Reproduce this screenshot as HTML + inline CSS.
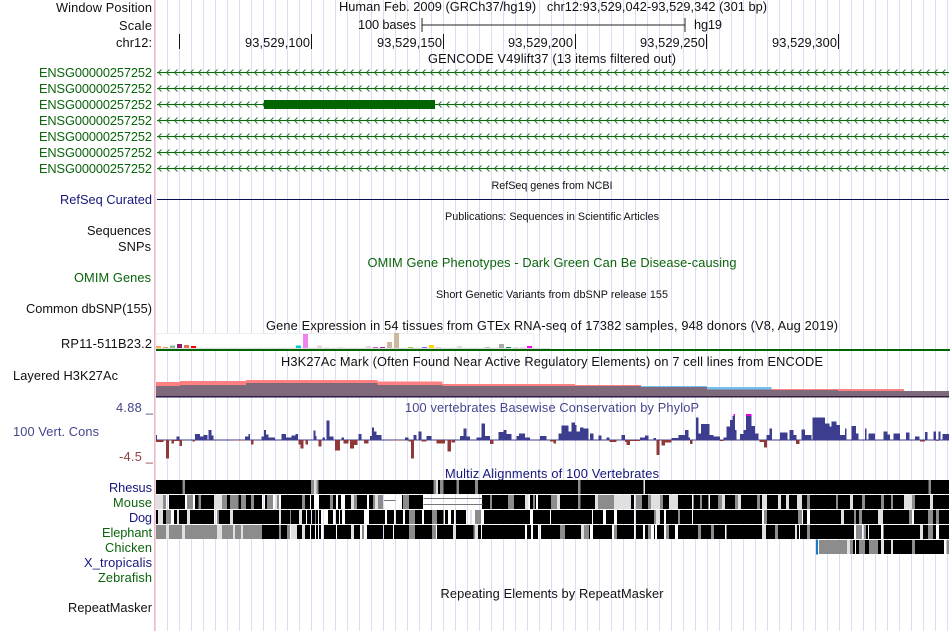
<!DOCTYPE html>
<html><head><meta charset="utf-8"><style>
html,body{margin:0;padding:0;background:#fff;width:950px;height:631px;overflow:hidden}
svg{display:block}
text{font-family:"Liberation Sans",sans-serif;font-size:12.8px;fill:#111}
.r{text-anchor:end}.m{text-anchor:middle}.s{font-size:10.8px}
.g{fill:#0a640a}.n{fill:#16167c}.b{fill:#45458f}.d{fill:#8f3f3f}
.ln{fill:none;stroke-width:42}
</style></head><body>
<svg width="950" height="631" viewBox="0 0 950 631" xmlns="http://www.w3.org/2000/svg" shape-rendering="crispEdges">
<defs>
<pattern id="grid" x="167" y="0" width="12" height="10" patternUnits="userSpaceOnUse"><rect x="0" y="0" width="1" height="10" fill="#dcdcf4"/></pattern>
<pattern id="arr" x="157" y="0" width="8" height="7" patternUnits="userSpaceOnUse"><path d="M0 3.5H8" stroke="#0a640a" stroke-width="1" fill="none"/><path d="M4.500 .5L1.500 3.500L4.500 6.500" stroke="#1f7a1f" stroke-width="1" fill="none" shape-rendering="auto"/></pattern>
</defs>
<rect width="950" height="631" fill="#fff"/>
<rect x="155" y="0" width="795" height="631" fill="url(#grid)"/>
<rect x="154" y="0" width="1" height="631" fill="#ffb4b4"/>

<!-- header -->
<text class="r" x="152" y="12" textLength="96">Window Position</text>
<text class="r" x="152" y="30" textLength="33">Scale</text>
<text class="r" x="152" y="47" textLength="36">chr12:</text>
<text x="339" y="11" textLength="428">Human Feb. 2009 (GRCh37/hg19)&#160;&#160; chr12:93,529,042-93,529,342 (301 bp)</text>
<text x="358" y="29" textLength="58">100 bases</text>
<text x="694" y="29" textLength="28">hg19</text>
<path d="M422 25H685" stroke="#222" fill="none"/>
<path d="M422 18V32M685 18V32" stroke="#222" fill="none"/>
<path d="M179.500 34V49M311.500 34V49M443.500 34V49M575.500 34V49M706.500 34V49M838.500 34V49" stroke="#111" fill="none"/>
<text x="245" y="47" textLength="65">93,529,100</text>
<text x="377" y="47" textLength="65">93,529,150</text>
<text x="508" y="47" textLength="65">93,529,200</text>
<text x="640" y="47" textLength="65">93,529,250</text>
<text x="772" y="47" textLength="65">93,529,300</text>
<text class="m" x="552" y="63" textLength="248">GENCODE V49lift37 (13 items filtered out)</text>

<!-- genes -->
<text class="r g" x="152" y="77" textLength="113">ENSG00000257252</text>
<text class="r g" x="152" y="93" textLength="113">ENSG00000257252</text>
<text class="r g" x="152" y="109" textLength="113">ENSG00000257252</text>
<text class="r g" x="152" y="125" textLength="113">ENSG00000257252</text>
<text class="r g" x="152" y="141" textLength="113">ENSG00000257252</text>
<text class="r g" x="152" y="157" textLength="113">ENSG00000257252</text>
<text class="r g" x="152" y="173" textLength="113">ENSG00000257252</text>
<g fill="url(#arr)">
<rect x="157" y="0" width="792" height="7" transform="translate(0,69)"/>
<rect x="157" y="0" width="792" height="7" transform="translate(0,85)"/>
<rect x="157" y="0" width="792" height="7" transform="translate(0,101)"/>
<rect x="157" y="0" width="792" height="7" transform="translate(0,117)"/>
<rect x="157" y="0" width="792" height="7" transform="translate(0,133)"/>
<rect x="157" y="0" width="792" height="7" transform="translate(0,149)"/>
<rect x="157" y="0" width="792" height="7" transform="translate(0,165)"/>
</g>
<rect x="264" y="100" width="171" height="9" fill="#006400"/>

<!-- middle labels -->
<text class="m s" x="552" y="189" textLength="121">RefSeq genes from NCBI</text>
<text class="r n" x="152" y="204" textLength="92">RefSeq Curated</text>
<rect x="157" y="199" width="792" height="1" fill="#0c0c50"/>
<text class="m s" x="552" y="220" textLength="214">Publications: Sequences in Scientific Articles</text>
<text class="r" x="151" y="235" textLength="64">Sequences</text>
<text class="r" x="151" y="251" textLength="33">SNPs</text>
<text class="m g" x="552" y="267" textLength="369">OMIM Gene Phenotypes - Dark Green Can Be Disease-causing</text>
<text class="r g" x="151" y="282" textLength="77">OMIM Genes</text>
<text class="m s" x="552" y="298" textLength="232">Short Genetic Variants from dbSNP release 155</text>
<text class="r" x="152" y="313" textLength="126">Common dbSNP(155)</text>
<text class="m" x="552" y="330" textLength="572">Gene Expression in 54 tissues from GTEx RNA-seq of 17382 samples, 948 donors (V8, Aug 2019)</text>
<text class="r" x="152" y="348" textLength="91">RP11-511B23.2</text>

<!-- expression -->
<g transform="translate(150,330) scale(.33333)">
<rect x="18" y="10" width="1134" height="44" fill="#fff" stroke="#eee" stroke-width="3"/>
<rect x="18" y="54" width="1182" height="3" fill="#ddd"/>
<path fill="#f9a75d" d="M18 54V48H33V54"/><path fill="#ee9944" d="M39 54V51H54V54"/><path fill="#8fbc8f" d="M60 54V47H75V54"/><path fill="#8b1a6b" d="M81 54V42H96V54"/><path fill="#ee6a50" d="M102 54V45H117V54"/><path fill="#f00" d="M123 54V48H138V54"/>
<path fill="#00cdcd" d="M438 54V47H453V54"/><path fill="#ee82ee" d="M459 54V12H474V54"/><path fill="#eed5d2" d="M501 54V47H516V54"/><path fill="#eeeee0" d="M522 54V51H537V54"/><path fill="#eedfcc" d="M564 54V51H579V54"/><path fill="#eed5d2" d="M648 54V48H663V54"/><path fill="#b469c8" d="M669 54V51H684V54"/><path fill="#9b30a0" d="M690 54V51H705V54"/><path fill="#cdb79e" d="M711 54V36H726V54M732 54V9H747V54"/><path fill="#9acd32" d="M774 54V51H789V54"/><path fill="#8470ff" d="M816 54V51H831V54"/><path fill="#ffd700" d="M837 54V45H852V54"/><path fill="#ffc0cb" d="M858 54V51H873V54"/><path fill="#ddd" d="M921 54V48H936V54M1089 54V51H1104V54M1110 54V51H1125V54"/><path fill="#bbb" d="M1005 54V51H1020V54"/><path fill="#aaa" d="M1047 54V42H1062V54"/><path fill="#008b45" d="M1068 54V51H1083V54"/><path fill="#f0f" d="M1131 54V48H1146V54"/>
</g>
<rect x="156" y="349" width="794" height="2" fill="#006400"/>

<!-- H3K27Ac -->
<text class="m" x="552" y="366" textLength="542">H3K27Ac Mark (Often Found Near Active Regulatory Elements) on 7 cell lines from ENCODE</text>
<text class="r" x="118" y="380" textLength="105">Layered H3K27Ac</text>
<g transform="translate(150,330) scale(.33333)">
<path fill="#ff8080" d="M18 202V156H90V153H288V150H682V154H878V162H1200V202"/>
<path fill="#7f6a7b" d="M18 202V168H90V165H288V159H682V165H878V168H1200V202"/>
<rect x="18" y="198" width="1182" height="2" fill="#5a1a4a"/><rect x="18" y="200" width="1182" height="2" fill="#14144e"/>
</g>
<g transform="translate(550,330) scale(.33333)">
<path fill="#ff8080" d="M0 202V162H75V165H273V202"/>
<path fill="#78c0f0" d="M273 202V168H471V171H665V202"/>
<path fill="#ff8080" d="M665 202V177H1062V202"/>
<path fill="#7f6a7b" d="M0 202V168H75V168H273V171H471V178H665V180H864V183H1197V202"/>
<rect x="0" y="198" width="471" height="2" fill="#5a1a4a"/><rect x="0" y="200" width="471" height="2" fill="#14144e"/>
<rect x="471" y="198" width="726" height="4" fill="#33203e"/>
</g>

<!-- phylop -->
<text class="r b" x="153" y="412" textLength="37">4.88 _</text>
<text class="b" x="13" y="436" textLength="86">100 Vert. Cons</text>
<text class="r d" x="153" y="461" textLength="34">-4.5 _</text>
<text class="m b" x="552" y="412" textLength="294">100 vertebrates Basewise Conservation by PhyloP</text>
<g transform="translate(150,330) scale(.33333)">
<rect x="18" y="328" width="1182" height="3" fill="#3d3d8f"/>
<path fill="#3d3d8f" d="M18 330V315H21V330M80 330V320H88V330M135 330V312H150V330M150 330V320H160V330M160 330V315H172V330M175 330V300H184V330M184 330V316H190V330M285 330V320H295V330M295 330V312H300V330M335 330V320H342V330M342 330V300H348V330M348 330V314H355V330M355 330V322H375V330M395 330V312H408V330M408 330V322H425V330M425 330V316H436V330M436 330V312H444V330M490 330V302H497V330M497 330V318H500V330M517 330V322H525V330M530 330V272H538V330M538 330V320H550V330M575 330V322H582V330M625 330V312H634V330M660 330V318H666V330M666 330V292H672V330M672 330V304H680V330M680 330V315H695V330M765 330V322H775V330M790 330V315H800V330M805 330V305H815V330M830 330V318H845V330M930 330V318H940V330M940 330V296H950V330M950 330V320H960V330M980 330V322H995V330M995 330V280H1005V330M1005 330V318H1020V330M1045 330V306H1060V330M1060 330V300H1070V330M1070 330V312H1085V330M1100 330V318H1107V330M1107 330V310H1125V330M1125 330V322H1140V330M1170 330V318H1190V330"/>
<path fill="#8f3838" d="M18 330V336H40V330M48 330V386H57V330M65 330V341H72V330M72 330V333H88V330M88 330V348H96V330M128 330V335H135V330M250 330V332H285V330M303 330V344H310V330M445 330V343H452V330M452 330V356H460V330M466 330V344H474V330M505 330V350H515V330M555 330V362H570V330M580 330V340H595V330M600 330V356H612V330M612 330V345H622V330M642 330V340H655V330M730 330V332H760V330M775 330V334H783V330M783 330V386H792V330M815 330V335H830V330M860 330V340H885V330M893 330V365H903V330M905 330V338H915V330M1020 330V342H1030V330"/>
</g>
<g transform="translate(550,330) scale(.33333)">
<rect x="0" y="328" width="1197" height="3" fill="#3d3d8f"/>
<path fill="#3d3d8f" d="M25 330V310H35V330M35 330V287H55V330M55 330V305H65V330M65 330V277H75V330M75 330V285H80V330M80 330V305H90V330M90 330V292H100V330M100 330V296H115V330M120 330V310H130V330M145 330V316H155V330M170 330V322H178V330M215 330V315H225V330M270 330V322H285V330M285 330V316H295V330M310 330V324H318V330M365 330V324H385V330M385 330V315H405V330M405 330V300H415V330M415 330V322H420V330M438 330V262H445V330M445 330V310H453V330M453 330V282H478V330M478 330V315H490V330M490 330V320H510V330M520 330V322H530V330M530 330V290H540V330M540 330V270H548V330M548 330V258H555V330M555 330V300H560V330M570 330V312H580V330M580 330V300H588V330M588 330V258H604V330M604 330V288H615V330M615 330V310H625V330M650 330V315H658V330M658 330V296H666V330M690 330V308H712V330M718 330V300H730V330M730 330V315H740V330M755 330V298H765V330M765 330V315H785V330M787 330V262H825V330M825 330V280H838V330M838 330V290H845V330M845 330V275H860V330M860 330V285H870V330M870 330V315H885V330M885 330V296H890V330M905 330V288H918V330M918 330V310H925V330M945 330V296H950V330M955 330V310H975V330M1000 330V305H1012V330M1012 330V314H1020V330M1030 330V310H1050V330M1068 330V308H1078V330M1095 330V320H1108V330M1125 330V306H1132V330M1150 330V304H1158V330M1165 330V304H1172V330M1178 330V312H1197V330"/>
<path fill="#8f3838" d="M0 330V334H18V330M10 330V340H18V330M178 330V336H200V330M225 330V336H230V330M230 330V345H240V330M240 330V333H270V330M320 330V375H328V330M335 330V347H345V330M345 330V338H365V330M420 330V342H428V330M510 330V333H520V330M628 330V336H642V330M642 330V352H651V330M738 330V342H748V330M1110 330V335H1125V330M1160 330V333H1165V330"/>
<path fill="#e000e0" d="M550 258V252H555V258M588 258V252H604V258"/>
</g>

<!-- multiz -->
<text class="m n" x="552" y="478" textLength="214">Multiz Alignments of 100 Vertebrates</text>
<text class="r n" x="152" y="492" textLength="43">Rhesus</text>
<text class="r g" x="152" y="507" textLength="39">Mouse</text>
<text class="r n" x="152" y="522" textLength="23">Dog</text>
<text class="r g" x="152" y="537" textLength="50">Elephant</text>
<text class="r g" x="152" y="552" textLength="47">Chicken</text>
<text class="r n" x="152" y="567" textLength="68">X_tropicalis</text>
<text class="r g" x="152" y="582" textLength="54">Zebrafish</text>
<text class="m" x="552" y="598" textLength="223">Repeating Elements by RepeatMasker</text>
<text class="r" x="152" y="612" textLength="84">RepeatMasker</text>

<g transform="translate(150,475) scale(.33333)" class="ln">
<!-- Row 1 -->
<path stroke="#000" d="M18 36H1200"/>
<path stroke="#8c8c8c" d="M97 36H105M483 36H492M500 36H506M850 36H858M870 36H880M919 36H927M975 36H984"/>
<path stroke="#e0e0e0" d="M492 36H500M858 36H864"/>
<!-- Row 2 -->
<path stroke="#e0e0e0" d="M18 81H24M24 81H39M192 81H216M375 81H381M603 81H612M675 81H684M1125 81H1135"/>
<path stroke="#8c8c8c" d="M39 81H48M111 81H129M145 81H153M216 81H231M240 81H265M273 81H288M303 81H312M351 81H369M381 81H387M456 81H465M540 81H549M612 81H621M669 81H675M684 81H699M759 81H777M1020 81H1026M1074 81H1092M1149 81H1155"/>
<path stroke="#000" d="M57 81H105M135 81H145M153 81H192M231 81H240M265 81H273M288 81H303M312 81H336M345 81H351M393 81H456M465 81H480M483 81H492M507 81H540M549 81H558M564 81H573M585 81H603M621 81H651M657 81H669M756 81H759M777 81H819M996 81H1020M1026 81H1074M1092 81H1125M1140 81H1149M1155 81H1158M1164 81H1200"/>
<path d="M702 76H736M821 71H997M821 88H997" stroke="#777" stroke-width="3" fill="none"/>
<!-- Row 3 -->
<path stroke="#e0e0e0" d="M24 126H39M81 126H87M111 126H120M240 126H249M387 126H393M447 126H456M960 126H966"/>
<path stroke="#8c8c8c" d="M48 126H63M201 126H207M420 126H423M777 126H795M846 126H861M975 126H993"/>
<path stroke="#000" d="M18 126H24M39 126H48M72 126H81M87 126H111M120 126H192M207 126H240M249 126H387M393 126H420M423 126H447M456 126H468M471 126H483M486 126H497M498 126H504M507 126H513M534 126H549M558 126H567M570 126H576M585 126H624M624 126H642M657 126H705M711 126H732M738 126H759M765 126H777M795 126H816M822 126H846M861 126H880M885 126H894M903 126H912M918 126H948M1002 126H1140M1149 126H1200"/>
<!-- Row 4 -->
<path stroke="#8c8c8c" d="M18 171H48M57 171H96M105 171H201M216 171H249M255 171H273M279 171H336M387 171H393M411 171H420M636 171H642M777 171H795M846 171H858M970 171H975"/>
<path stroke="#e0e0e0" d="M48 171H57M96 171H105M201 171H216M249 171H255M273 171H279M423 171H441M456 171H465M603 171H612M909 171H918M975 171H984"/>
<path stroke="#000" d="M336 171H387M393 171H411M441 171H456M465 171H480M483 171H495M498 171H504M507 171H513M522 171H558M561 171H603M612 171H630M651 171H699M702 171H729M732 171H777M795 171H822M822 171H846M861 171H909M918 171H970M984 171H993M996 171H1125M1131 171H1143M1149 171H1164M1173 171H1200"/>
</g>
<g transform="translate(550,475) scale(.33333)" class="ln">
<!-- Row 1 -->
<path stroke="#000" d="M0 36H1197"/>
<path stroke="#8c8c8c" d="M84 36H92M1135 36H1143"/>
<path stroke="#e8e8e8" d="M280 36H285"/>
<!-- Row 2 -->
<path stroke="#8c8c8c" d="M3 81H21M84 81H92M144 81H192M258 81H276M294 81H303M330 81H339M450 81H456M507 81H516M555 81H564M621 81H630M771 81H780M858 81H864M936 81H945M993 81H1002M1023 81H1029M1086 81H1095"/>
<path stroke="#e0e0e0" d="M21 81H30M135 81H144M192 81H243M303 81H330M357 81H384M516 81H525M564 81H573M636 81H651M684 81H693M708 81H717M741 81H756M900 81H909M1062 81H1086M1140 81H1149"/>
<path stroke="#000" d="M0 81H3M30 81H84M92 81H135M243 81H252M276 81H294M339 81H357M384 81H426M430 81H450M456 81H475M480 81H505M525 81H555M573 81H621M630 81H636M651 81H684M693 81H708M717 81H741M756 81H771M780 81H858M864 81H900M909 81H936M945 81H993M1002 81H1023M1029 81H1062M1095 81H1140M1149 81H1197"/>
<!-- Row 3 -->
<path stroke="#8c8c8c" d="M312 126H318M384 126H390M642 126H651M744 126H756M912 126H918M927 126H936M1077 126H1086M1134 126H1149M1158 126H1167"/>
<path stroke="#e0e0e0" d="M318 126H330M873 126H882M984 126H999"/>
<path stroke="#000" d="M3 126H126M129 126H159M168 126H192M201 126H252M258 126H312M330 126H342M348 126H384M390 126H426M429 126H636M651 126H744M759 126H771M780 126H873M882 126H912M918 126H927M936 126H984M999 126H1077M1092 126H1098M1098 126H1134M1149 126H1158M1167 126H1197"/>
<!-- Row 4 -->
<path stroke="#8c8c8c" d="M30 171H45M102 171H117M192 171H201M294 171H303M348 171H357M444 171H453M483 171H492M675 171H684M771 171H780M918 171H936M942 171H948M1134 171H1149"/>
<path stroke="#e0e0e0" d="M93 171H102M636 171H648M735 171H741M1110 171H1119"/>
<path stroke="#000" d="M0 171H30M45 171H93M117 171H120M129 171H186M201 171H252M258 171H279M285 171H294M312 171H315M321 171H342M357 171H375M384 171H444M453 171H483M492 171H525M530 171H636M648 171H675M684 171H735M741 171H747M750 171H771M780 171H912M948 171H954M957 171H993M1000 171H1110M1119 171H1134M1149 171H1158M1167 171H1197"/>
<!-- Row 5 -->
<path stroke="#1a78c8" d="M798 216H804" stroke-width="46"/>
<path stroke="#8c8c8c" d="M807 216H891M900 216H909M927 216H945M957 216H984M1086 216H1095"/>
<path stroke="#e0e0e0" d="M891 216H900M993 216H1002M1023 216H1029"/>
<path stroke="#000" d="M909 216H915M918 216H927M945 216H957M984 216H993M1002 216H1023M1029 216H1086M1095 216H1182"/>
<path stroke="#8c8c8c" d="M1190 216H1197"/>
</g>
</svg>
</body></html>
